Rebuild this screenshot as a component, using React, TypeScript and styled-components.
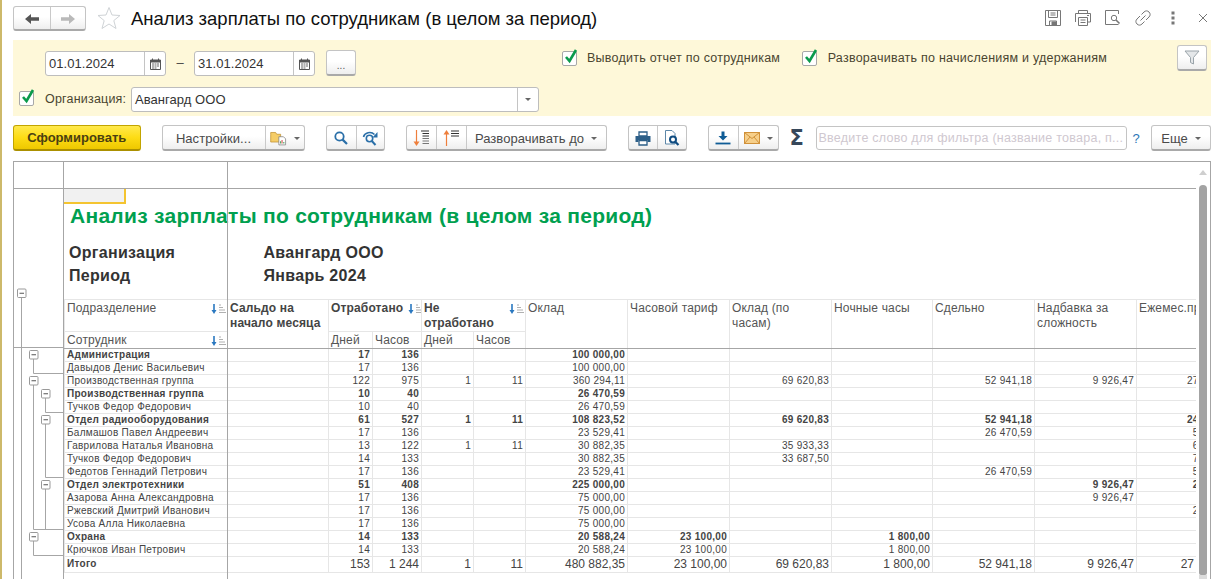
import React from 'react';
import styled, { createGlobalStyle } from 'styled-components';

const Global = createGlobalStyle`
  html, body { margin: 0; padding: 0; background: #fff; overflow: hidden; }
  body { font-family: "Liberation Sans", Arial, sans-serif; }
  #root { width: 1219px; height: 579px; overflow: hidden; }
`;

const Page = styled.div`
  display: flex;
  width: 1219px;
  height: 579px;
  overflow: hidden;
  background: #fff;
`;
const EdgeStrip = styled.div`
  flex: none;
  width: 2px;
  background: #cdb96a;
`;
const Main = styled.main`
  flex: none;
  width: 1198px;
  margin-left: 11px;
  display: flex;
  flex-direction: column;
`;

/* ---------- title bar ---------- */
const TitleBar = styled.header`
  flex: none;
  height: 40px;
  display: flex;
  align-items: flex-start;
`;
const ButtonGroup = styled.div<{ $h?: number }>`
  flex: none;
  display: flex;
  height: ${p => p.$h ?? 26}px;
  box-sizing: border-box;
  border: 1px solid #c4c4c4;
  border-bottom: 2px solid #a9a9a9;
  border-radius: 3px;
  background: linear-gradient(#ffffff 0%, #ffffff 45%, #eeeeee 100%);
`;
const Segment = styled.div<{ $w: number; $first?: boolean }>`
  width: ${p => p.$w}px;
  flex: none;
  box-sizing: border-box;
  display: flex;
  align-items: center;
  justify-content: center;
  gap: 7px;
  color: #4a4a4a;
  font-size: 13px;
  letter-spacing: 0.05px;
  padding-top: 1px;
  ${p => (p.$first ? '' : 'border-left: 1px solid #c9c9c9;')}
`;
const NavGroup = styled(ButtonGroup)`
  margin-top: 6px;
`;
const StarWrap = styled.div`
  flex: none;
  margin: 6px 0 0 11px;
  height: 24px;
`;
const Title = styled.h1`
  margin: 8px 0 0 10px;
  font-size: 18.5px;
  line-height: 22px;
  font-weight: 400;
  color: #111;
  white-space: nowrap;
`;
const TitleTools = styled.div`
  margin-left: auto;
  display: flex;
  align-items: center;
  height: 35px;
  color: #777;
`;
const ToolIcon = styled.div<{ $w: number }>`
  flex: none;
  width: ${p => p.$w}px;
  display: flex;
  align-items: center;
`;

/* ---------- filter panel ---------- */
const Panel = styled.section`
  flex: none;
  height: 76px;
  box-sizing: border-box;
  background: #fef8d9;
  display: flex;
  color: #4a4530;
  font-size: 12px;
`;
const PanelLeft = styled.div`
  flex: none;
  width: 527px;
  padding: 10px 0 0 6px;
  box-sizing: border-box;
`;
const DateRow = styled.div`
  display: flex;
  align-items: flex-start;
  margin-left: 26px;
  height: 36px;
`;
const Field = styled.div<{ $w: number }>`
  flex: none;
  width: ${p => p.$w}px;
  height: 25px;
  margin-top: 1px;
  box-sizing: border-box;
  display: flex;
  align-items: stretch;
  background: #fff;
  border: 1px solid #bdbdbd;
  border-radius: 3px;
`;
const FieldText = styled.div`
  flex: 1;
  padding-left: 3px;
  font-size: 13px;
  line-height: 23px;
  letter-spacing: 0.05px;
  color: #333;
`;
const FieldButton = styled.div`
  flex: none;
  width: 20px;
  display: flex;
  align-items: center;
  justify-content: center;
  border-left: 1px solid #c4c4c4;
`;
const Dash = styled.div`
  width: 28px;
  text-align: center;
  font-size: 13px;
  line-height: 25px;
  color: #444;
`;
const MoreButton = styled(ButtonGroup)`
  width: 30px;
  margin-left: 11px;
  align-items: center;
  justify-content: center;
  padding-top: 6px;
  font-size: 10px;
  color: #555;
`;
const OrgRow = styled.div`
  display: flex;
  align-items: center;
  height: 25px;
`;
const OrgLabel = styled.span`
  margin: 0 6px 0 11px;
  font-size: 12.5px;
  letter-spacing: 0.2px;
  white-space: nowrap;
  width: 80px;
`;
const Box = styled.div`
  flex: none;
  position: relative;
  width: 15px;
  height: 15px;
  box-sizing: border-box;
  background: #fff;
  border: 1px solid #a8a8a8;
  border-radius: 2px;
  & > svg {
    position: absolute;
    left: 0;
    top: -4px;
  }
`;
const PanelChecks = styled.div`
  flex: none;
  margin: 11px 0 0 21.5px;
  display: flex;
  align-items: flex-start;
  height: 16px;
`;
const CheckLabel = styled.span<{ $gap: number }>`
  margin: 0 ${p => p.$gap}px 0 10.5px;
  font-size: 12.5px;
  line-height: 15px;
  letter-spacing: 0.24px;
  white-space: nowrap;
`;
const FilterButton = styled(ButtonGroup)`
  margin: 5px 4px 0 auto;
  width: 30px;
  align-items: center;
  justify-content: center;
`;

/* ---------- command bar ---------- */
const CommandBar = styled.nav`
  flex: none;
  height: 26px;
  margin: 9px 0 10px;
  display: flex;
  gap: 21px;
`;
const PrimaryButton = styled.button`
  flex: none;
  width: 127.5px;
  height: 26px;
  padding: 0;
  box-sizing: border-box;
  border: 1px solid #c2a400;
  border-bottom: 2px solid #ab9000;
  border-radius: 3px;
  background: linear-gradient(#ffe94d 0%, #fddc15 50%, #eec800 100%);
  font: bold 13px "Liberation Sans", Arial, sans-serif;
  color: #4a3f12;
`;
const Caret = styled.i`
  flex: none;
  width: 0;
  height: 0;
  border-left: 3.5px solid transparent;
  border-right: 3.5px solid transparent;
  border-top: 3.5px solid #666;
`;
const RightTools = styled.div`
  display: flex;
  flex: 1;
  align-items: center;
`;
const Sigma = styled.span`
  flex: none;
  width: 37px;
  padding-left: 11px;
  box-sizing: border-box;
  font: bold 21px/26px "DejaVu Sans", sans-serif;
  color: #36475a;
`;
const SearchBox = styled.div`
  flex: none;
  width: 311px;
  height: 24px;
  box-sizing: border-box;
  border: 1px solid #c4c4c4;
  border-radius: 3px;
  background: #fff;
  padding-left: 2px;
  font-size: 12.5px;
  line-height: 22px;
  letter-spacing: 0.25px;
  color: #cfc8d0;
  white-space: nowrap;
  overflow: hidden;
`;
const Help = styled.span`
  flex: none;
  margin-left: 6px;
  width: 18px;
  font-size: 13px;
  color: #2a78b8;
`;
const MoreMenu = styled(ButtonGroup)`
  margin-left: auto;
`;

/* ---------- report ---------- */
const Report = styled.section`
  flex: 1;
  min-height: 0;
  display: flex;
  box-sizing: border-box;
  border: 1px solid #a6a6a6;
  border-bottom: 0;
  width: 1198px;
`;
const ReportBody = styled.div`
  flex: none;
  width: 1182px;
  display: grid;
  grid-template-columns: 50px 1132px;
  grid-template-rows: 27px 1fr;
  overflow: hidden;
`;
const CornerCell = styled.div`
  border-right: 1px solid #a6a6a6;
  border-bottom: 1px solid #a6a6a6;
  box-sizing: border-box;
`;
const ColumnRuler = styled.div`
  border-bottom: 1px solid #a6a6a6;
  box-sizing: border-box;
  position: relative;
`;
const Gutter = styled.div`
  box-sizing: border-box;
  border-right: 1px solid #a6a6a6;
  position: relative;
  overflow: hidden;
  & > svg { display: block; }
`;
const Sheet = styled.div`
  position: relative;
  overflow: hidden;
  min-width: 0;
`;
const FreezeLine = styled.div`
  position: absolute;
  left: 163px;
  top: 0;
  bottom: 0;
  width: 1px;
  background: #a6a6a6;
  z-index: 2;
`;
const ActiveCell = styled.div`
  width: 60px;
  height: 13px;
  background: #f1f1f1;
  border-right: 2px solid #f4c430;
  border-bottom: 2px solid #f4c430;
`;
const ReportTitle = styled.h2`
  margin: 0 0 0 6px;
  font-size: 21px;
  line-height: 24px;
  font-weight: 700;
  letter-spacing: 0.28px;
  color: #00a04f;
  white-space: nowrap;
`;
const Meta = styled.dl`
  margin: 13px 0 11.5px 5px;
  display: grid;
  grid-template-columns: 194.5px auto;
  grid-auto-rows: 23px;
  height: 46px;
  font-size: 16px;
  line-height: 23px;
  font-weight: 700;
  letter-spacing: 0.3px;
  color: #333;
  & > dt, & > dd { margin: 0; }
`;
const Table = styled.table`
  table-layout: fixed;
  border-collapse: collapse;
  width: 1133px;
  font-size: 10px;
  color: #444;
`;
const HeadRow = styled.tr<{ $h: number }>`
  height: ${p => p.$h}px;
`;
const Th = styled.th<{ $strong?: boolean; $dark?: boolean }>`
  padding: 1px 1px 0 2px;
  box-sizing: border-box;
  vertical-align: top;
  text-align: left;
  font-size: 12px;
  line-height: 15px;
  font-weight: ${p => (p.$strong ? 700 : 400)};
  letter-spacing: 0.15px;
  color: ${p => (p.$strong ? '#444' : '#555')};
  border: 1px solid #e6e6e6;
  ${p => (p.$dark ? 'border-bottom: 1px solid #a6a6a6;' : '')}
  overflow: hidden;
`;
const ThInner = styled.div<{ $spread?: boolean }>`
  display: flex;
  gap: 5px;
  align-items: flex-start;
  justify-content: ${p => (p.$spread ? 'space-between' : 'flex-start')};
  & > svg { flex: none; margin-top: 3px; }
`;
const Tr = styled.tr<{ $total?: boolean }>`
  height: ${p => (p.$total ? 16 : 13)}px;
`;
const Td = styled.td<{ $bold?: boolean; $num?: boolean; $big?: boolean }>`
  padding: ${p => (p.$num ? '0 2px 0 0' : '0 0 0 2px')};
  box-sizing: border-box;
  border: 1px solid #e6e6e6;
  text-align: ${p => (p.$num ? 'right' : 'left')};
  font-weight: ${p => (p.$bold ? 700 : 400)};
  font-size: ${p => (p.$big ? 12 : 10)}px;
  line-height: 12px;
  letter-spacing: ${p => (p.$big ? 0 : 0.28)}px;
  white-space: nowrap;
  overflow: hidden;
`;
const ScrollTrack = styled.div`
  flex: none;
  width: 14px;
  display: flex;
  flex-direction: column;
  align-items: center;
  box-sizing: border-box;
`;
const ScrollArrow = styled.i`
  margin-top: 8px;
  width: 0;
  height: 0;
  border-left: 4px solid transparent;
  border-right: 4px solid transparent;
  border-bottom: 5px solid #cfcfcf;
`;
const ScrollThumb = styled.div`
  margin-top: 10px;
  width: 8px;
  height: 390px;
  background: #a3a3a3;
  border-radius: 4px 4px 2px 2px;
`;
const ScrollEnd = styled.div`
  width: 8px;
  flex: 1;
  background: #dcdcdc;
`;

/* ---------- icons ---------- */
const ArrowNav = ({ dir, color }: { dir: 'l' | 'r'; color: string }) => (
  <svg width="16" height="12" viewBox="0 0 16 12">
    <path d={dir === 'l' ? 'M1 6 L7 1 V4.3 H15 V7.7 H7 V11 Z' : 'M15 6 L9 1 V4.3 H1 V7.7 H9 V11 Z'} fill={color} />
  </svg>
);
const Star = () => (
  <svg width="24" height="24" viewBox="0 0 24 24">
    <path d="M12 1.5 L15 9 L23 9.5 L16.8 14.6 L19 22.5 L12 18 L5 22.5 L7.2 14.6 L1 9.5 L9 9 Z" fill="#fff" stroke="#cfd3d6" strokeWidth="1" />
  </svg>
);
const Calendar = () => (
  <svg width="11" height="12" viewBox="0 0 11 12">
    <path d="M0.5 2 H10.5 V11.5 H0.5 Z" fill="#fff" stroke="#555" />
    <path d="M0.5 2 H10.5 V4.5 H0.5 Z" fill="#555" />
    <path d="M2.5 0.5 V2.5 M8.5 0.5 V2.5" stroke="#555" />
    <path d="M2 6 H4 M4.5 6 H6.5 M7 6 H9 M2 8 H4 M4.5 8 H6.5 M7 8 H9 M2 10 H4 M4.5 10 H6.5" stroke="#666" />
  </svg>
);
const Check = () => (
  <svg width="16" height="17" viewBox="0 0 16 17">
    <path d="M3 9 L6.5 13 L13 2" fill="none" stroke="#0b9a4b" strokeWidth="2.6" />
  </svg>
);
const Funnel = () => (
  <svg width="16" height="15" viewBox="0 0 16 15">
    <path d="M1 1 H15 L9.5 7.5 V14 L6.5 12.5 V7.5 Z" fill="#e4e7e9" stroke="#9aa4aa" />
  </svg>
);
const Folder = () => (
  <svg width="17" height="15" viewBox="0 0 24 20">
    <path d="M1 4 V1.5 H8 L9.5 4 H15 V15 H1 Z" fill="#f5cd68" stroke="#bd8c2a" />
    <path d="M12.5 7.5 H19 L22 10.5 V19 H12.5 Z" fill="#fff" stroke="#777" />
    <path d="M15 17 V14 M19.5 17 V15" stroke="#3fa35a" strokeWidth="1.5" />
    <path d="M17 17 V12" stroke="#d9534f" strokeWidth="1.5" />
  </svg>
);
const Search = () => (
  <svg width="14" height="14" viewBox="0 0 14 14">
    <circle cx="5.5" cy="5.5" r="4.2" fill="none" stroke="#2a6fa8" strokeWidth="1.8" />
    <path d="M8.6 8.6 L13 13" stroke="#2a6fa8" strokeWidth="2.2" />
  </svg>
);
const SearchAgain = () => (
  <svg width="17" height="15" viewBox="0 0 17 15">
    <circle cx="7.5" cy="7.5" r="3.2" fill="none" stroke="#2a6fa8" strokeWidth="1.6" />
    <path d="M9.8 10 L13.5 14" stroke="#2a6fa8" strokeWidth="2" />
    <path d="M1.5 6 C2.5 1.5 9 0 12.5 3.5" fill="none" stroke="#2a6fa8" strokeWidth="1.6" />
    <path d="M15.5 1 V6.5 H10.5 Z" fill="#2a6fa8" />
  </svg>
);
const SortExpand = () => (
  <svg width="17" height="18" viewBox="0 0 17 18">
    <path d="M3.5 1 V15" stroke="#ee7f3c" strokeWidth="1.2" />
    <path d="M0.5 12.5 L3.5 17 L6.5 12.5 Z" fill="#ee7f3c" />
    <path d="M8 2 H16 M9.5 4.5 H16 M9.5 7 H16" stroke="#333" strokeWidth="1.1" />
    <path d="M9.5 9.5 H16 M9.5 12 H16 M9.5 14.5 H16" stroke="#777" strokeWidth="1" />
  </svg>
);
const SortCollapse = () => (
  <svg width="17" height="18" viewBox="0 0 17 18">
    <path d="M3.5 17 V3" stroke="#ee7f3c" strokeWidth="1.2" />
    <path d="M0.5 5.5 L3.5 1 L6.5 5.5 Z" fill="#ee7f3c" />
    <path d="M8 2 H16 M8 4.5 H16 M8 7 H16" stroke="#333" strokeWidth="1.1" />
  </svg>
);
const PrintBlue = () => (
  <svg width="16" height="15" viewBox="0 0 16 15">
    <path d="M4 1 H12 V5 H4 Z" fill="#fff" stroke="#2d5f88" strokeWidth="1.3" />
    <path d="M0.5 5 H15.5 V11 H12.5 V9 H3.5 V11 H0.5 Z" fill="#2d5f88" />
    <path d="M4 9.5 H12 V14 H4 Z" fill="#fff" stroke="#2d5f88" strokeWidth="1.3" />
  </svg>
);
const PreviewBlue = () => (
  <svg width="16" height="16" viewBox="0 0 16 16">
    <path d="M1.5 0.5 H8 L11 3.5 V14 H1.5 Z" fill="#fff" stroke="#5d87a8" />
    <circle cx="9" cy="9.5" r="3" fill="#fff" stroke="#0f4c81" strokeWidth="2" />
    <path d="M11 11.5 L14.5 15" stroke="#0f4c81" strokeWidth="2.2" />
  </svg>
);
const Download = () => (
  <svg width="16" height="14" viewBox="0 0 16 14">
    <path d="M6.5 0.5 H9.5 V5 H12.5 L8 9.5 L3.5 5 H6.5 Z" fill="#0f5c96" />
    <path d="M0.5 12.5 H15.5" stroke="#0f5c96" strokeWidth="1.8" />
  </svg>
);
const Envelope = () => (
  <svg width="16" height="12" viewBox="0 0 16 12">
    <rect x="0.5" y="0.5" width="15" height="11" fill="#f6cf8a" stroke="#d0913a" />
    <path d="M0.5 0.5 L8 6.5 L15.5 0.5 M0.5 11.5 L6 5 M15.5 11.5 L10 5" fill="none" stroke="#d0913a" />
  </svg>
);
const SaveIcon = () => (
  <svg width="16" height="16" viewBox="0 0 16 16" fill="none" stroke="currentColor">
    <path d="M0.5 0.5 H15.5 V15.5 H0.5 Z" />
    <path d="M3.5 0.5 V7.5 H12.5 V0.5 M5.5 3 H10.5 M5.5 5 H10.5" />
    <path d="M4.5 15.5 V11 H11.5 V15.5" />
    <path d="M7 12 H11 V15 H7 Z" fill="currentColor" />
  </svg>
);
const PrintIcon = () => (
  <svg width="16" height="16" viewBox="0 0 16 16" fill="none" stroke="currentColor">
    <path d="M3.5 3.5 V0.5 H12.5 V3.5 M0.5 12 V3.5 H15.5 V12 H12.5" />
    <path d="M3.5 7.5 H12.5 V15.5 H3.5 Z M5.5 10 H10.5 M5.5 12.5 H10.5" />
    <path d="M12 5.5 H14" />
  </svg>
);
const PreviewIcon = () => (
  <svg width="16" height="16" viewBox="0 0 16 16" fill="none" stroke="currentColor">
    <path d="M13.5 14.5 H0.5 V0.5 H13.5 V4" />
    <circle cx="9" cy="8" r="2.7" />
    <path d="M11 10 L14.5 13.5" strokeWidth="1.6" />
  </svg>
);
const LinkIcon = () => (
  <svg width="16" height="16" viewBox="0 0 16 16" fill="none" stroke="currentColor">
    <path d="M6.5 4.5 L9 2 C10.5 0.5 12.5 0.5 14 2 C15.5 3.5 15.5 5.5 14 7 L11 10" />
    <path d="M9.5 11.5 L7 14 C5.5 15.5 3.5 15.5 2 14 C0.5 12.5 0.5 10.5 2 9 L5 6" />
    <path d="M5.5 10.5 L10.5 5.5" />
  </svg>
);
const DotsIcon = () => (
  <svg width="4" height="14" viewBox="0 0 4 14" fill="currentColor">
    <rect x="0.5" y="0.5" width="3" height="3" />
    <rect x="0.5" y="5.5" width="3" height="3" />
    <rect x="0.5" y="10.5" width="3" height="3" />
  </svg>
);
const CloseIcon = () => (
  <svg width="10" height="10" viewBox="0 0 10 10" fill="none" stroke="currentColor">
    <path d="M1 1 L9 9 M9 1 L1 9" />
  </svg>
);
const SortMark = () => (
  <svg width="15" height="10" viewBox="0 0 15 10">
    <path d="M3 0 V7" stroke="#2a78c0" strokeWidth="1.6" />
    <path d="M0.5 6 L3 10 L5.5 6 Z" fill="#2a78c0" />
    <path d="M8 1 H10 M8 3.5 H12 M8 6 H14 M8 8.5 H15" stroke="#b0b0b0" />
  </svg>
);

/* ---------- outline (tree) ---------- */
const OX = 14;
const OY = 189;
const Toggle = ({ x, y }: { x: number; y: number }) => (
  <g transform={`translate(${x - OX} ${y - OY})`}>
    <rect x="-4" y="-4" width="8.5" height="8.5" rx="1" fill="#fff" stroke="#999" />
    <path d="M-2 0.25 H2.5" stroke="#555" />
  </g>
);
const Branch = ({ x, y1, y2 }: { x: number; y1: number; y2: number }) => (
  <path d={`M${x - OX} ${y1 - OY} V${y2 - OY} H${64 - OX}`} fill="none" stroke="#a6a6a6" />
);
const Outline = () => (
  <svg width="49" height="390" viewBox="0 0 49 390">
    <path d={`M${21.5 - OX} ${297 - OY} V390`} stroke="#a6a6a6" fill="none" />
    <path d={`M0 ${347.5 - OY} H49`} stroke="#a6a6a6" />
    <Branch x={33.5} y1={358} y2={373.5} />
    <Branch x={33.5} y1={385} y2={529.5} />
    <Branch x={45.5} y1={398} y2={412.5} />
    <Branch x={45.5} y1={424} y2={477.5} />
    <Branch x={45.5} y1={489} y2={529.5} />
    <Branch x={33.5} y1={541} y2={555.5} />
    <Toggle x={21.5} y={293} />
    <Toggle x={33.5} y={354.5} />
    <Toggle x={33.5} y={380.5} />
    <Toggle x={45.5} y={393.5} />
    <Toggle x={45.5} y={419.5} />
    <Toggle x={45.5} y={484.5} />
    <Toggle x={33.5} y={536.5} />
  </svg>
);

/* ---------- data ---------- */
const widths = [163, 101, 44, 49, 52, 52, 102, 102, 102, 101, 102, 102, 100];
type Row = { name: string; bold?: boolean; v: Record<number, string> };
const rows: Row[] = [
  { name: 'Администрация', bold: true, v: { 0: '17', 1: '136', 4: '100 000,00' } },
  { name: 'Давыдов Денис Васильевич', v: { 0: '17', 1: '136', 4: '100 000,00' } },
  { name: 'Производственная группа', v: { 0: '122', 1: '975', 2: '1', 3: '11', 4: '360 294,11', 6: '69 620,83', 8: '52 941,18', 9: '9 926,47', 10: '27 481,90' } },
  { name: 'Производственная группа', bold: true, v: { 0: '10', 1: '40', 4: '26 470,59' } },
  { name: 'Тучков Федор Федорович', v: { 0: '10', 1: '40', 4: '26 470,59' } },
  { name: 'Отдел радиооборудования', bold: true, v: { 0: '61', 1: '527', 2: '1', 3: '11', 4: '108 823,52', 6: '69 620,83', 8: '52 941,18', 10: '24 481,90' } },
  { name: 'Балмашов Павел Андреевич', v: { 0: '17', 1: '136', 4: '23 529,41', 8: '26 470,59', 10: '5 000,00' } },
  { name: 'Гаврилова Наталья Ивановна', v: { 0: '13', 1: '122', 2: '1', 3: '11', 4: '30 882,35', 6: '35 933,33', 10: '6 681,90' } },
  { name: 'Тучков Федор Федорович', v: { 0: '14', 1: '133', 4: '30 882,35', 6: '33 687,50', 10: '7 800,00' } },
  { name: 'Федотов Геннадий Петрович', v: { 0: '17', 1: '136', 4: '23 529,41', 8: '26 470,59', 10: '5 000,00' } },
  { name: 'Отдел электротехники', bold: true, v: { 0: '51', 1: '408', 4: '225 000,00', 9: '9 926,47', 10: '2 000,00' } },
  { name: 'Азарова Анна Александровна', v: { 0: '17', 1: '136', 4: '75 000,00', 9: '9 926,47' } },
  { name: 'Ржевский Дмитрий Иванович', v: { 0: '17', 1: '136', 4: '75 000,00', 10: '2 000,00' } },
  { name: 'Усова Алла Николаевна', v: { 0: '17', 1: '136', 4: '75 000,00' } },
  { name: 'Охрана', bold: true, v: { 0: '14', 1: '133', 4: '20 588,24', 5: '23 100,00', 7: '1 800,00' } },
  { name: 'Крючков Иван Петрович', v: { 0: '14', 1: '133', 4: '20 588,24', 5: '23 100,00', 7: '1 800,00' } },
];
const total: Record<number, string> = { 0: '153', 1: '1 244', 2: '1', 3: '11', 4: '480 882,35', 5: '23 100,00', 6: '69 620,83', 7: '1 800,00', 8: '52 941,18', 9: '9 926,47', 10: '27 481,90' };
const valueCols = [0, 1, 2, 3, 4, 5, 6, 7, 8, 9, 10];
const amountHeads = ['Оклад', 'Часовой тариф', 'Оклад (по часам)', 'Ночные часы', 'Сдельно', 'Надбавка за сложность', 'Ежемес.премия'];

export default function App() {
  return (
    <Page>
      <Global />
      <EdgeStrip />
      <Main>
        <TitleBar>
          <NavGroup $h={25}>
            <Segment $w={36} $first><ArrowNav dir="l" color="#555" /></Segment>
            <Segment $w={35}><ArrowNav dir="r" color="#b9b9b9" /></Segment>
          </NavGroup>
          <StarWrap><Star /></StarWrap>
          <Title>Анализ зарплаты по сотрудникам (в целом за период)</Title>
          <TitleTools>
            <ToolIcon $w={30}><SaveIcon /></ToolIcon>
            <ToolIcon $w={30}><PrintIcon /></ToolIcon>
            <ToolIcon $w={30}><PreviewIcon /></ToolIcon>
            <ToolIcon $w={36}><LinkIcon /></ToolIcon>
            <ToolIcon $w={27}><DotsIcon /></ToolIcon>
            <ToolIcon $w={13}><CloseIcon /></ToolIcon>
          </TitleTools>
        </TitleBar>

        <Panel>
          <PanelLeft>
            <DateRow>
              <Field $w={121}>
                <FieldText>01.01.2024</FieldText>
                <FieldButton><Calendar /></FieldButton>
              </Field>
              <Dash>–</Dash>
              <Field $w={121}>
                <FieldText>31.01.2024</FieldText>
                <FieldButton><Calendar /></FieldButton>
              </Field>
              <MoreButton $h={26}>...</MoreButton>
            </DateRow>
            <OrgRow>
              <Box><Check /></Box>
              <OrgLabel>Организация:</OrgLabel>
              <Field $w={408}>
                <FieldText>Авангард ООО</FieldText>
                <FieldButton><Caret /></FieldButton>
              </Field>
            </OrgRow>
          </PanelLeft>
          <PanelChecks>
            <Box><Check /></Box>
            <CheckLabel $gap={22}>Выводить отчет по сотрудникам</CheckLabel>
            <Box><Check /></Box>
            <CheckLabel $gap={0}>Разворачивать по начислениям и удержаниям</CheckLabel>
          </PanelChecks>
          <FilterButton $h={26}><Funnel /></FilterButton>
        </Panel>

        <CommandBar>
          <PrimaryButton>Сформировать</PrimaryButton>
          <ButtonGroup>
            <Segment $w={102} $first>Настройки...</Segment>
            <Segment $w={39}><Folder /><Caret /></Segment>
          </ButtonGroup>
          <ButtonGroup>
            <Segment $w={29} $first><Search /></Segment>
            <Segment $w={28}><SearchAgain /></Segment>
          </ButtonGroup>
          <ButtonGroup>
            <Segment $w={29} $first><SortExpand /></Segment>
            <Segment $w={30}><SortCollapse /></Segment>
            <Segment $w={140}>Разворачивать до<Caret /></Segment>
          </ButtonGroup>
          <ButtonGroup>
            <Segment $w={28} $first><PrintBlue /></Segment>
            <Segment $w={29}><PreviewBlue /></Segment>
          </ButtonGroup>
          <RightTools>
            <ButtonGroup>
              <Segment $w={29} $first><Download /></Segment>
              <Segment $w={40}><Envelope /><Caret /></Segment>
            </ButtonGroup>
            <Sigma>Σ</Sigma>
            <SearchBox>Введите слово для фильтра (название товара, п...</SearchBox>
            <Help>?</Help>
            <MoreMenu>
              <Segment $w={58} $first>Еще<Caret /></Segment>
            </MoreMenu>
          </RightTools>
        </CommandBar>

        <Report>
          <ReportBody>
            <CornerCell />
            <ColumnRuler><FreezeLine /></ColumnRuler>
            <Gutter><Outline /></Gutter>
            <Sheet>
              <FreezeLine />
              <ActiveCell />
              <ReportTitle>Анализ зарплаты по сотрудникам (в целом за период)</ReportTitle>
              <Meta>
                <dt>Организация</dt><dd>Авангард ООО</dd>
                <dt>Период</dt><dd>Январь 2024</dd>
              </Meta>
              <Table>
                <colgroup>
                  {widths.map((w, i) => <col key={i} width={w} />)}
                </colgroup>
                <thead>
                  <HeadRow $h={31}>
                    <Th><ThInner $spread>Подразделение<SortMark /></ThInner></Th>
                    <Th $strong $dark rowSpan={2}>Сальдо на начало месяца</Th>
                    <Th $strong colSpan={2}><ThInner>Отработано<SortMark /></ThInner></Th>
                    <Th $strong colSpan={2}><ThInner $spread>Не<br />отработано<SortMark /></ThInner></Th>
                    {amountHeads.map(h => <Th key={h} $dark rowSpan={2}>{h}</Th>)}
                  </HeadRow>
                  <HeadRow $h={17}>
                    <Th $dark><ThInner $spread>Сотрудник<SortMark /></ThInner></Th>
                    <Th $dark>Дней</Th>
                    <Th $dark>Часов</Th>
                    <Th $dark>Дней</Th>
                    <Th $dark>Часов</Th>
                  </HeadRow>
                </thead>
                <tbody>
                  {rows.map((r, i) => (
                    <Tr key={i}>
                      <Td $bold={r.bold}>{r.name}</Td>
                      <Td />
                      {valueCols.map(c => <Td key={c} $num $bold={r.bold}>{r.v[c] ?? ''}</Td>)}
                    </Tr>
                  ))}
                  <Tr $total>
                    <Td $bold>Итого</Td>
                    <Td />
                    {valueCols.map(c => <Td key={c} $num $big>{total[c]}</Td>)}
                  </Tr>
                </tbody>
              </Table>
            </Sheet>
          </ReportBody>
          <ScrollTrack>
            <ScrollArrow />
            <ScrollThumb />
            <ScrollEnd />
          </ScrollTrack>
        </Report>
      </Main>
    </Page>
  );
}
